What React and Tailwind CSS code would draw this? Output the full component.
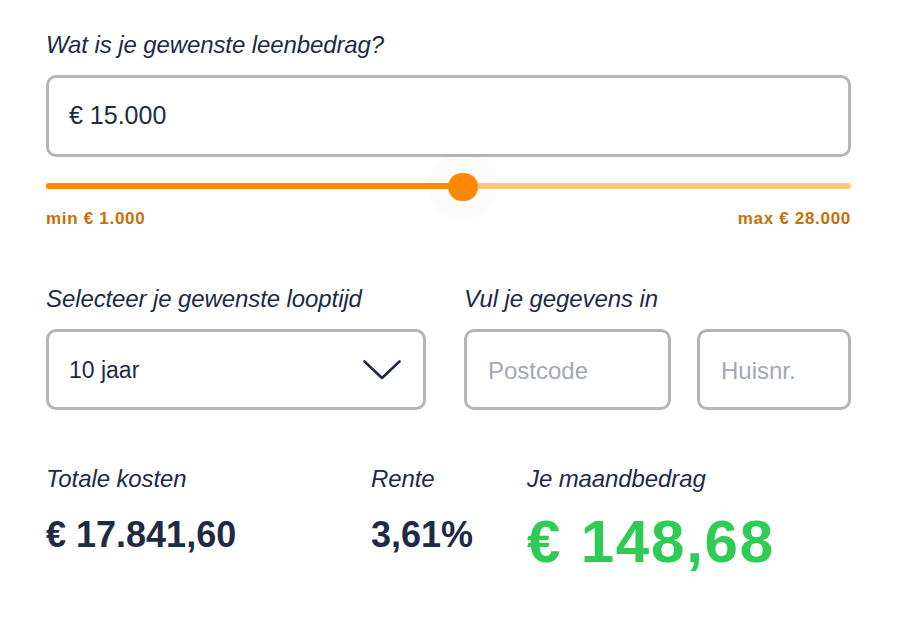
import React, { useState } from "react";

const navy = "text-[#1f2a44]";

function FieldLabel({ children }) {
  return (
    <div className={`text-[24px] leading-[28px] italic tracking-[-0.1px] ${navy}`}>{children}</div>
  );
}

function Chevron() {
  return (
    <svg width="38" height="20" viewBox="0 0 38 20" fill="none">
      <path
        d="M1.5 1.5 L19 18 L36.5 1.5"
        stroke="#1f2a44"
        strokeWidth="2.6"
        strokeLinecap="round"
        strokeLinejoin="round"
      />
    </svg>
  );
}

function AmountSlider({ value, min, max }) {
  const pct = ((value - min) / (max - min)) * 100;
  return (
    <div className="relative mt-[15px] h-[28px]">
      <div className="absolute left-0 right-0 top-[11px] h-[6px] rounded-full bg-[#ffc685]" />
      <div
        className="absolute left-0 top-[11px] h-[6px] rounded-full bg-[#ff8a00]"
        style={{ width: `${pct}%` }}
      />
      <div
        className="absolute top-[1px] h-[28px] w-[30px] -translate-x-1/2 rounded-full bg-[#ff8800] shadow-[0_0_0_20px_rgba(0,0,0,0.012)]"
        style={{ left: `${pct}%` }}
      />
    </div>
  );
}

export default function App() {
  const [amount] = useState(15000);

  return (
    <div className="min-h-[625px] w-[899px] bg-white px-[46px] pt-[31px] font-['Liberation_Sans',Arial,sans-serif]">
      <div className="w-[805px]">
        <FieldLabel>Wat is je gewenste leenbedrag?</FieldLabel>
        <div className="mt-[16px] flex h-[82px] items-center rounded-[10px] border-[3px] border-[#b5b5b5] pl-[20px] text-[25px] text-[#1f2a44]">
          € 15.000
        </div>

        <AmountSlider value={amount} min={1000} max={28000} />

        <div className="mt-[9px] flex justify-between text-[17px] leading-[20px] font-bold tracking-[0.7px] text-[#c96f05]">
          <span>min € 1.000</span>
          <span>max € 28.000</span>
        </div>

        <div className="mt-[56px] flex gap-[38px]">
          <div className="w-[380px]">
            <FieldLabel>Selecteer je gewenste looptijd</FieldLabel>
            <div className="mt-[16px] flex h-[81px] items-center justify-between rounded-[10px] border-[3px] border-[#b5b5b5] pl-[20px] pr-[22px] text-[23px] text-[#1f2a44]">
              <span className="pt-[2px]">10 jaar</span>
              <Chevron />
            </div>
          </div>
          <div className="flex-1">
            <FieldLabel>Vul je gegevens in</FieldLabel>
            <div className="mt-[16px] flex gap-[26px]">
              <div className="flex h-[81px] w-[207px] items-center rounded-[10px] border-[3px] border-[#b5b5b5] pl-[21px] pt-[2px] text-[24px] text-[#a2a8b5]">
                Postcode
              </div>
              <div className="flex h-[81px] w-[154px] items-center rounded-[10px] border-[3px] border-[#b5b5b5] pl-[21px] pt-[2px] text-[24px] text-[#a2a8b5]">
                Huisnr.
              </div>
            </div>
          </div>
        </div>

        <div className="mt-[55px] grid grid-cols-[325px_156px_1fr]">
          <FieldLabel>Totale kosten</FieldLabel>
          <FieldLabel>Rente</FieldLabel>
          <FieldLabel>Je maandbedrag</FieldLabel>
          <div className={`mt-[24px] text-[36px] leading-[36px] font-bold ${navy}`}>
            € 17.841,60
          </div>
          <div className={`mt-[24px] text-[36px] leading-[36px] font-bold ${navy}`}>
            3,61%
          </div>
          <div className="mt-[21px] text-[60px] leading-[56px] font-bold tracking-[1.8px] text-[#2ecb55]">
            € 148,68
          </div>
        </div>
      </div>
    </div>
  );
}
